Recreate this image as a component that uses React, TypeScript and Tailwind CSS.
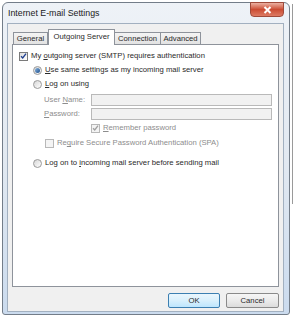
import React from "react";

const U = ({ children }: { children: React.ReactNode }) => <span className="underline underline-offset-[1px]">{children}</span>;

function Check({ checked, disabled }: { checked?: boolean; disabled?: boolean }) {
  return (
    <div
      className={`w-[9px] h-[9px] shrink-0 border ${disabled ? "border-[#b8b8b8] bg-[#f4f4f4]" : "border-[#7a7a7a] bg-gradient-to-br from-[#dcdcdc] to-white"} flex items-center justify-center`}
    >
      {checked && (
        <svg width="8" height="8" viewBox="0 0 8 8">
          <path d="M1.2 4.2 L3.1 6.2 L6.9 1.2" fill="none" stroke={disabled ? "#a0a0a0" : "#1f3f8f"} strokeWidth="1.5" />
        </svg>
      )}
    </div>
  );
}

function Radio({ checked }: { checked?: boolean }) {
  return (
    <div className="w-[9px] h-[9px] shrink-0 rounded-full border border-[#9a9a9a] bg-gradient-to-br from-[#d6d6d6] to-white flex items-center justify-center">
      {checked && <div className="w-[5px] h-[5px] rounded-full bg-gradient-to-br from-[#8ab4de] to-[#1b4f8c]" />}
    </div>
  );
}

export default function App() {
  return (
    <div
      className="w-[296px] h-[320px] bg-white flex pt-[2px] pl-[2px] text-[7.7px] text-[#2a2a2a] leading-none"
      style={{ fontFamily: '"Liberation Sans", Arial, sans-serif' }}
    >
      <div className="w-[288px] h-[313px] flex flex-col rounded-t-[6px] rounded-b-[3px] border border-[#737d89] bg-gradient-to-b from-[#eef2f7] via-[#e2e9f1] to-[#cbdbee]">
        <div className="h-[20px] shrink-0 flex items-center pl-[5px] relative">
          <span className="text-[8.8px] text-[#1a1a1a]">Internet E-mail Settings</span>
          <div className="absolute top-[-1px] right-[5px] w-[34px] h-[15px] rounded-b-[4px] border border-[#a04a3a] bg-gradient-to-b from-[#eab0a2] via-[#cb4c33] to-[#dd7a63] flex items-center justify-center">
            <svg width="9" height="8" viewBox="0 0 9 8">
              <path d="M1.5 1 L7.5 7 M7.5 1 L1.5 7" stroke="white" strokeWidth="2" />
            </svg>
          </div>
        </div>
        <div className="h-[289px] ml-[4px] mr-[5px] border border-[#a2b0c0] bg-[#f0f0f0] flex flex-col px-[4px] pt-[5px] pb-[3px]">
          <div className="h-[15px] flex items-end pl-[1px] shrink-0">
            <div className="w-[35px] h-[12px] border border-b-0 border-[#8e939b] bg-gradient-to-b from-[#f4f4f4] to-[#e2e2e2] flex items-center justify-center">General</div>
            <div className="relative z-10 w-[67px] h-[16px] -mb-px border border-b-0 border-[#8e939b] bg-white flex items-center justify-center pb-[2px]">Outgoing Server</div>
            <div className="w-[46px] h-[12px] border border-b-0 border-l-0 border-[#8e939b] bg-gradient-to-b from-[#f4f4f4] to-[#e2e2e2] flex items-center justify-center">Connection</div>
            <div className="w-[40px] h-[12px] border border-b-0 border-l-0 border-[#8e939b] bg-gradient-to-b from-[#f4f4f4] to-[#e2e2e2] flex items-center justify-center">Advanced</div>
          </div>
          <div className="h-[243px] shrink-0 border border-[#8e939b] bg-white flex flex-col pt-[4px] pl-[6px] pr-[6px]">
            <div className="h-[14px] flex items-center gap-[3px]">
              <Check checked />
              <span>My <U>o</U>utgoing server (SMTP) requires authentication</span>
            </div>
            <div className="h-[14px] flex items-center gap-[3px] pl-[14px]">
              <Radio checked />
              <span><U>U</U>se same settings as my incoming mail server</span>
            </div>
            <div className="h-[14px] flex items-center gap-[3px] pl-[14px]">
              <Radio />
              <span><U>L</U>og on using</span>
            </div>
            <div className="h-[12px] mt-[3px] flex items-center pl-[25px] text-[#8d8d8d]">
              <span className="w-[47px] shrink-0">User <U>N</U>ame:</span>
              <div className="flex-1 h-[12px] border border-[#b9b9b9] bg-[#f1f1f1]" />
            </div>
            <div className="h-[12px] mt-[2px] flex items-center pl-[25px] text-[#8d8d8d]">
              <span className="w-[47px] shrink-0"><U>P</U>assword:</span>
              <div className="flex-1 h-[12px] border border-[#b9b9b9] bg-[#f1f1f1]" />
            </div>
            <div className="h-[14px] mt-[1px] flex items-center gap-[3px] pl-[72px] text-[#8d8d8d]">
              <Check checked disabled />
              <span><U>R</U>emember password</span>
            </div>
            <div className="h-[14px] mt-[1px] flex items-center gap-[3px] pl-[26px] text-[#8d8d8d]">
              <Check disabled />
              <span>Re<U>q</U>uire Secure Password Authentication (SPA)</span>
            </div>
            <div className="h-[14px] mt-[6px] flex items-center gap-[3px] pl-[14px]">
              <Radio />
              <span>Log on to <U>i</U>ncoming mail server before sending mail</span>
            </div>
          </div>
          <div className="flex-1 flex items-end justify-end gap-[6px] pr-0">
            <div className="w-[52px] h-[15px] rounded-[2px] border border-[#3c7fb1] bg-gradient-to-b from-[#eaf6fd] via-[#d9f0fc] to-[#bee6fd] flex items-center justify-center">OK</div>
            <div className="w-[53px] h-[15px] rounded-[2px] border border-[#8a8a8a] bg-gradient-to-b from-[#f6f6f6] via-[#ebebeb] to-[#dcdcdc] flex items-center justify-center">Cancel</div>
          </div>
        </div>
      </div>
      <div className="ml-[2px] mt-[2px] w-px h-[200px] bg-[#9a9a9a]" />
    </div>
  );
}
